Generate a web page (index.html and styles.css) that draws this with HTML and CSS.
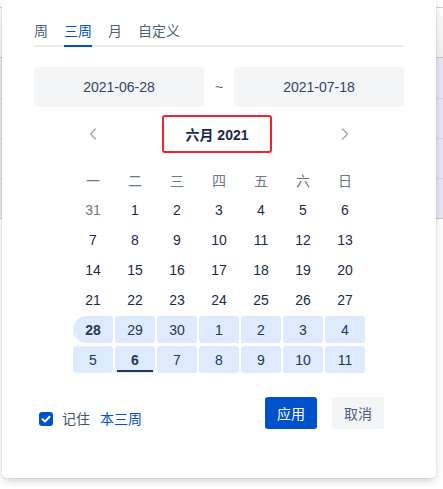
FILE: index.html
```html
<!DOCTYPE html>
<html lang="zh">
<head>
<meta charset="utf-8">
<title>Date picker</title>
<link rel="stylesheet" href="styles.css">
</head>
<body>
<div class="popup">
  <div class="tabs">
    <span class="tab">周</span>
    <span class="tab active">三周</span>
    <span class="tab">月</span>
    <span class="tab">自定义</span>
  </div>

  <div class="range">
    <div class="date-box">2021-06-28</div>
    <span class="tilde">~</span>
    <div class="date-box">2021-07-18</div>
  </div>

  <div class="grid">
    <div class="nav">
      <svg width="8" height="12" viewBox="0 0 8 12"><path d="M6.5 1 L1.5 6 L6.5 11" fill="none" stroke="#a5adba" stroke-width="1.6" stroke-linecap="round" stroke-linejoin="round"/></svg>
    </div>
    <div class="title"><span class="title-box">六月 2021</span></div>
    <div class="nav">
      <svg width="8" height="12" viewBox="0 0 8 12"><path d="M1.5 1 L6.5 6 L1.5 11" fill="none" stroke="#a5adba" stroke-width="1.6" stroke-linecap="round" stroke-linejoin="round"/></svg>
    </div>

    <div class="wd">一</div><div class="wd">二</div><div class="wd">三</div><div class="wd">四</div><div class="wd">五</div><div class="wd">六</div><div class="wd">日</div>

    <div class="d muted">31</div><div class="d">1</div><div class="d">2</div><div class="d">3</div><div class="d">4</div><div class="d">5</div><div class="d">6</div>
    <div class="d">7</div><div class="d">8</div><div class="d">9</div><div class="d">10</div><div class="d">11</div><div class="d">12</div><div class="d">13</div>
    <div class="d">14</div><div class="d">15</div><div class="d">16</div><div class="d">17</div><div class="d">18</div><div class="d">19</div><div class="d">20</div>
    <div class="d">21</div><div class="d">22</div><div class="d">23</div><div class="d">24</div><div class="d">25</div><div class="d">26</div><div class="d">27</div>
    <div class="d sel start">28</div><div class="d sel">29</div><div class="d sel">30</div><div class="d sel">1</div><div class="d sel">2</div><div class="d sel">3</div><div class="d sel">4</div>
    <div class="d sel">5</div><div class="d sel today">6</div><div class="d sel">7</div><div class="d sel">8</div><div class="d sel">9</div><div class="d sel">10</div><div class="d sel">11</div>
  </div>

  <div class="footer">
    <label class="remember">
      <span class="checkbox">
        <svg width="10" height="8" viewBox="0 0 10 8"><path d="M1.5 4.2 L4 6.5 L8.5 1.8" fill="none" stroke="#fff" stroke-width="2" stroke-linecap="round" stroke-linejoin="round"/></svg>
      </span>
      <span class="remember-text">记住</span>
      <span class="remember-value">本三周</span>
    </label>
    <div class="buttons">
      <button class="btn primary">应用</button>
      <button class="btn">取消</button>
    </div>
  </div>
</div>
</body>
</html>
```

FILE: styles.css
```css
html, body {
  margin: 0;
  padding: 0;
}
body {
  width: 443px;
  height: 489px;
  overflow: hidden;
  font-family: "Liberation Sans", "Noto Sans CJK SC", sans-serif;
  font-size: 14px;
  color: #172b4d;
  background:
    linear-gradient(#d0d0d6, #d0d0d6) 0 7px / 100% 1px no-repeat,
    linear-gradient(#c4c4cc, #c4c4cc) 0 57px / 100% 1px no-repeat,
    linear-gradient(#d6d4e2, #d6d4e2) 0 98px / 100% 1px no-repeat,
    linear-gradient(#d6d4e2, #d6d4e2) 0 138px / 100% 1px no-repeat,
    linear-gradient(#d6d4e2, #d6d4e2) 0 178px / 100% 1px no-repeat,
    linear-gradient(#c4c4cc, #c4c4cc) 0 218px / 100% 1px no-repeat,
    linear-gradient(#e8e6f3, #e8e6f3) 0 57px / 100% 161px no-repeat,
    linear-gradient(#ffffff, #f2f2f4) 0 0 / 100% 57px no-repeat,
    #ffffff;
}

.popup {
  box-sizing: border-box;
  margin-left: 2px;
  width: 434px;
  height: 478px;
  background: #fff;
  border-radius: 0 0 4px 4px;
  box-shadow: 0 4px 8px -2px rgba(9, 30, 66, 0.25), 0 0 1px rgba(9, 30, 66, 0.31);
  padding: 21px 32px 0 32px;
}

.tabs {
  display: flex;
  gap: 16px;
  border-bottom: 2px solid #ebecf0;
}
.tab {
  line-height: 20px;
  padding-bottom: 4px;
  color: #505f79;
  margin-bottom: -2px;
  border-bottom: 2px solid transparent;
}
.tab.active {
  color: #0052cc;
  border-bottom-color: #0052cc;
}

.range {
  display: flex;
  align-items: center;
  margin-top: 20px;
}
.date-box {
  width: 170px;
  height: 40px;
  line-height: 40px;
  text-align: center;
  background: #f4f5f7;
  border-radius: 4px;
  color: #344563;
}
.tilde {
  width: 30px;
  text-align: center;
  color: #505f79;
  line-height: 40px;
}

.grid {
  width: 292px;
  margin: 8px auto 0;
  display: grid;
  grid-template-columns: repeat(7, 40px);
  grid-template-rows: 48px repeat(7, 27px);
  column-gap: 2px;
  row-gap: 3px;
}
.nav {
  height: 38px;
  display: flex;
  align-items: center;
  justify-content: center;
}
.title {
  grid-column: span 5;
  height: 38px;
  display: flex;
  justify-content: center;
  padding-right: 4px;
}
.title-box {
  box-sizing: border-box;
  width: 110px;
  height: 38px;
  border: 2px solid #f5222d;
  border-radius: 3px;
  display: flex;
  align-items: center;
  justify-content: center;
  font-weight: bold;
  color: #172b4d;
}
.wd {
  display: flex;
  align-items: center;
  justify-content: center;
  color: #6b778c;
}
.d {
  position: relative;
  display: flex;
  align-items: center;
  justify-content: center;
  color: #172b4d;
  border-radius: 3px;
}
.d.muted {
  color: #6b778c;
}
.d.sel {
  background: #deebff;
  color: #253858;
}
.d.start {
  border-radius: 14px 3px 3px 14px;
  font-weight: bold;
}
.d.today {
  font-weight: bold;
}
.d.today::after {
  content: "";
  position: absolute;
  left: 2px;
  right: 2px;
  bottom: 1px;
  height: 2px;
  background: #253858;
}

.footer {
  display: flex;
  justify-content: space-between;
  align-items: flex-start;
  margin-top: 24px;
}
.remember {
  display: flex;
  align-items: center;
  margin-top: 12px;
  margin-left: 5px;
  line-height: 20px;
}
.checkbox {
  width: 14px;
  height: 14px;
  border-radius: 3px;
  background: #0052cc;
  display: flex;
  align-items: center;
  justify-content: center;
  margin-right: 9px;
}
.remember-text {
  color: #42526e;
  margin-right: 10px;
}
.remember-value {
  color: #0052cc;
}
.buttons {
  display: flex;
  gap: 15px;
  margin-right: 20px;
}
.btn {
  font-family: "Liberation Sans", "Noto Sans CJK SC", sans-serif;
  font-size: 14px;
  width: 52px;
  height: 32px;
  border: none;
  border-radius: 3px;
  background: #f4f5f7;
  color: #505f79;
  padding: 0;
}
.btn.primary {
  background: #0052cc;
  color: #fff;
}
```
